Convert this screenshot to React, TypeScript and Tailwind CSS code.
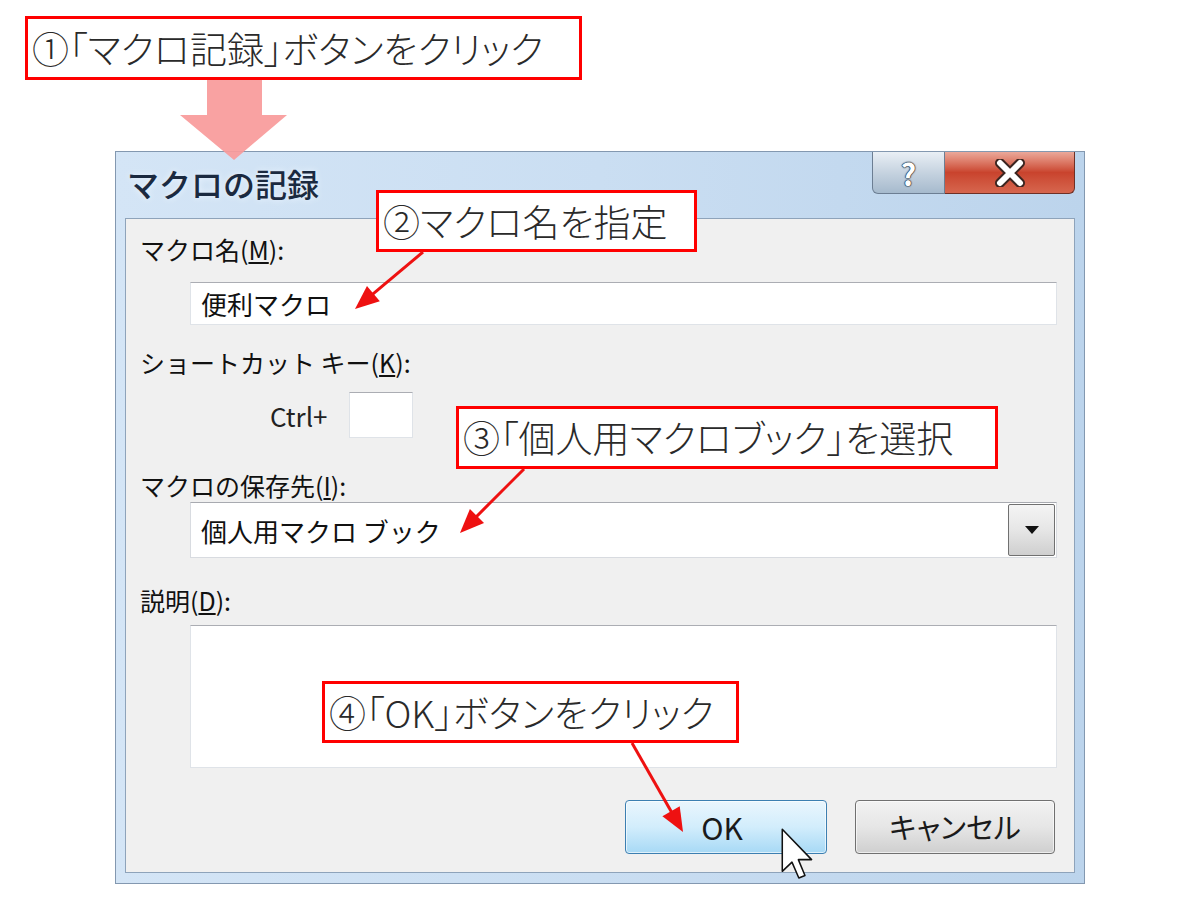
type Pt = [number, number];

const jp = "font-['Noto_Sans_CJK_JP',sans-serif]";

function RedArrow({ from, to }: { from: Pt; to: Pt }) {
  const [x1, y1] = from;
  const [x2, y2] = to;
  const len = Math.hypot(x2 - x1, y2 - y1);
  const dx = (x2 - x1) / len;
  const dy = (y2 - y1) / len;
  const headLen = 24;
  const headHalf = 10;
  const bx = x2 - dx * headLen;
  const by = y2 - dy * headLen;
  const px = -dy * headHalf;
  const py = dx * headHalf;
  return (
    <g>
      <line x1={x1} y1={y1} x2={bx + dx * 2} y2={by + dy * 2} stroke="#ee1111" strokeWidth={3} />
      <polygon points={`${x2},${y2} ${bx + px},${by + py} ${bx - px},${by - py}`} fill="#ee1111" />
    </g>
  );
}

function Callout({ className, children }: { className: string; children: React.ReactNode }) {
  return (
    <div
      className={`flex items-center border-[3px] border-[#ff0000] bg-white pl-[4px] text-[37px] font-light leading-none text-[#2a2a2a] [font-feature-settings:'palt'] ${className}`}
    >
      {children}
    </div>
  );
}

function Label({ children, className = "" }: { children: React.ReactNode; className?: string }) {
  return <div className={`h-[30px] text-[25px] leading-[30px] text-[#111] ${className}`}>{children}</div>;
}

export default function App() {
  return (
    <div className={`relative h-[900px] w-[1200px] overflow-hidden bg-white ${jp}`}>
      <Callout className="ml-[25px] mt-[16px] h-[64px] w-[557px]">①「マクロ記録」ボタンをクリック</Callout>

      {/* dialog */}
      <div className="ml-[115px] mt-[71px] flex w-[970px] flex-col border border-[#8398b0] bg-gradient-to-r from-[#d4e5f6] via-[#cadef2] to-[#bcd4ec] px-[9px] pb-[10px]">
        <div className="flex h-[66px] items-start justify-between">
          <span className="pl-[2px] pt-[11px] text-[32px] font-medium leading-[40px] text-[#1b2a40] [text-shadow:0_0_6px_#eef6ff]">
            マクロの記録
          </span>
          <div className="flex h-[42px]">
            <div className="flex w-[73px] items-center justify-center rounded-bl-[6px] border border-t-0 border-[#6c7e93] bg-gradient-to-b from-[#e9eff5] via-[#c6d3e0] to-[#a6bacd]">
              <span className="text-[30px] font-bold leading-none text-white [text-shadow:0_0_2px_#1e2c3c,0_0_1px_#1e2c3c,0_0_1px_#1e2c3c,0_0_1px_#1e2c3c]">
                ?
              </span>
            </div>
            <div className="flex w-[130px] items-center justify-center rounded-br-[6px] border border-l-0 border-t-0 border-[#6e3026] bg-gradient-to-b from-[#eaa89a] via-[#c9432d] to-[#d6664e]">
              <svg width="36" height="28" viewBox="0 0 36 28">
                <path d="M8 4 L28 24 M28 4 L8 24" stroke="#3b2520" strokeWidth="10" strokeLinecap="round" />
                <path d="M8 4 L28 24 M28 4 L8 24" stroke="#ffffff" strokeWidth="6" strokeLinecap="round" />
              </svg>
            </div>
          </div>
        </div>

        {/* client panel */}
        <div className="flex flex-col border border-[#8ea3ba] bg-[#f0f0f0] pb-[18px] pl-[14px] pr-[17px] pt-[15px]">
          <Label>
            マクロ名(<span className="underline">M</span>):
          </Label>
          <div className="ml-[50px] mt-[18px] flex h-[43px] items-center border border-[#dfe3e8] border-t-[#abadb3] bg-white pl-[10px] text-[26px] text-[#111]">
            便利マクロ
          </div>

          <Label className="mt-[22px]">
            ショートカット キー(<span className="underline">K</span>):
          </Label>
          <div className="ml-[130px] mt-[15px] flex h-[46px] items-center">
            <span className="w-[79px] text-[26px] text-[#222]">Ctrl+</span>
            <div className="h-[46px] w-[64px] border border-[#dfe3e8] border-t-[#abadb3] bg-white" />
          </div>

          <Label className="mt-[32px]">
            マクロの保存先(<span className="underline">I</span>):
          </Label>
          <div className="ml-[50px] mt-[2px] flex h-[56px] items-center border border-[#d8dbe0] border-t-[#a8aab0] bg-white pl-[10px] pr-[1px] text-[26px] text-[#111]">
            <span className="flex-1">個人用マクロ ブック</span>
            <div className="flex h-[52px] w-[47px] items-center justify-center rounded-[2px] border border-[#707070] bg-gradient-to-b from-[#f4f4f4] via-[#e6e6e6] to-[#cfcfcf]">
              <svg width="14" height="8" viewBox="0 0 14 8">
                <path d="M0 0 H14 L7 8 Z" fill="#111" />
              </svg>
            </div>
          </div>

          <Label className="mt-[27px]">
            説明(<span className="underline">D</span>):
          </Label>
          <div className="ml-[50px] mt-[10px] h-[143px] border border-[#dfe3e8] border-t-[#abadb3] bg-white" />

          <div className="mr-[2px] mt-[32px] flex h-[54px] justify-end gap-[28px]">
            <div className="flex w-[202px] items-center justify-center rounded-[4px] border border-[#3c7fb1] bg-gradient-to-b from-[#eaf6fd] via-[#d2edfc] to-[#a7d9f5] pr-[8px] text-[30px] text-[#1a1a1a] shadow-[inset_0_0_0_1px_#ffffffa0]">
              OK
            </div>
            <div className="flex w-[200px] items-center justify-center rounded-[4px] border border-[#707070] bg-gradient-to-b from-[#f2f2f2] via-[#e6e6e6] to-[#cfcfcf] text-[29px] text-[#1a1a1a] shadow-[inset_0_0_0_1px_#ffffffa0] [font-feature-settings:'palt']">
              キャンセル
            </div>
          </div>
        </div>
      </div>

      {/* pink arrow from step 1 */}
      <svg className="pointer-events-none absolute left-0 top-0" width="1200" height="900">
        <polygon points="207,80 262,80 262,115 287,115 234,160 180,115 207,115" fill="#f89a9a" fillOpacity="0.92" />
      </svg>

      <Callout className="absolute left-[376px] top-[190px] h-[62px] w-[321px]">②マクロ名を指定</Callout>
      <Callout className="absolute left-[456px] top-[406px] h-[63px] w-[542px]">③「個人用マクロブック」を選択</Callout>
      <Callout className="absolute left-[322px] top-[681px] h-[62px] w-[417px]">④「OK」ボタンをクリック</Callout>

      <svg className="pointer-events-none absolute left-0 top-0" width="1200" height="900">
        <RedArrow from={[423, 252]} to={[355, 309]} />
        <RedArrow from={[524, 469]} to={[460, 533]} />
        <RedArrow from={[632, 743]} to={[683, 832]} />
        {/* mouse pointer */}
        <g transform="translate(781 828) scale(2.55)">
          <path
            d="M0.5 0.5 L0.5 17 L4.3 13.4 L7 19.6 L9.4 18.6 L6.8 12.4 L12 12.4 Z"
            fill="#ffffff"
            stroke="#111"
            strokeWidth="0.6"
            strokeLinejoin="round"
          />
        </g>
      </svg>
    </div>
  );
}
